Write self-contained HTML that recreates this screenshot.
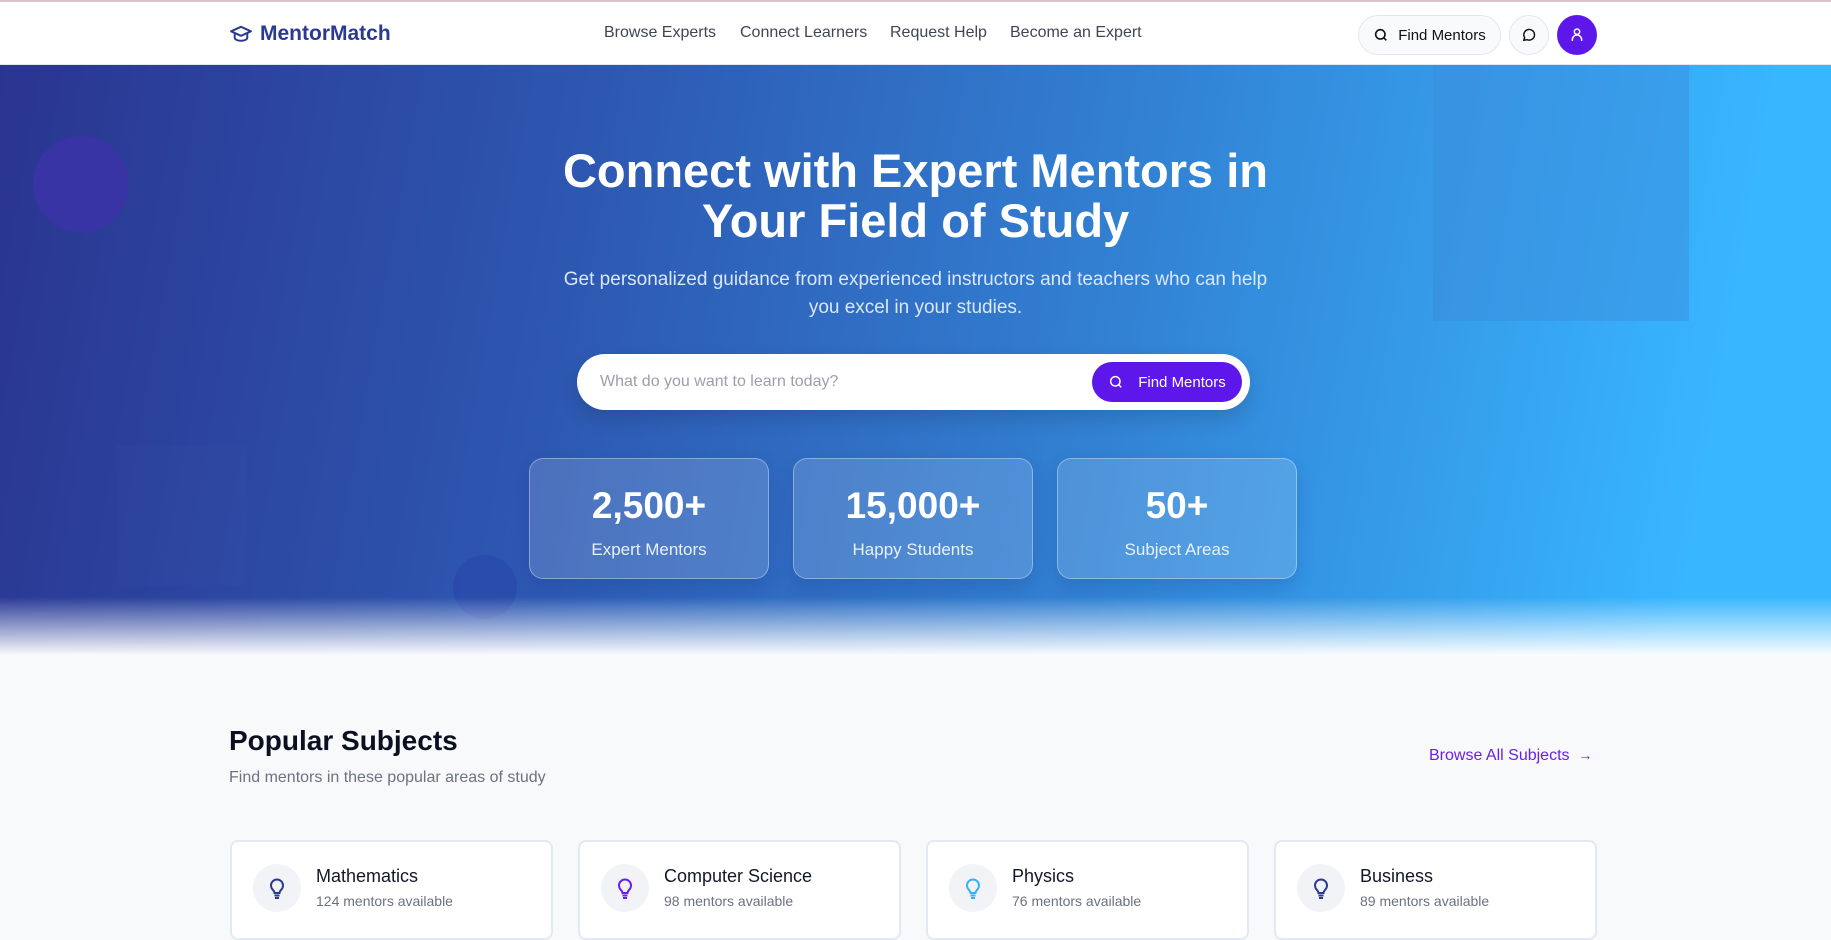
<!DOCTYPE html>
<html><head><meta charset="utf-8">
<style>
*{margin:0;padding:0;box-sizing:border-box}
body{width:1831px;height:924px;overflow:hidden;font-family:"Liberation Sans",sans-serif;background:#f8f9fb;position:relative}
.hdr{position:absolute;left:0;top:0;width:1831px;height:65px;background:#fff;border-top:2px solid #d9c3cc;border-bottom:1px solid #e3e8ef}
.logo{position:absolute;left:230px;top:20px;display:flex;align-items:center;gap:8px;color:#2b3a8f;font-weight:bold;font-size:21px}
.nav{position:absolute;top:22px;font-size:16px;color:#3f4654}
.btn1{position:absolute;left:1358px;top:13px;width:143px;height:40px;border:1px solid #e2e7ef;border-radius:20px;background:#f8fafc;display:flex;align-items:center;justify-content:center;gap:9px;font-size:15px;color:#111}
.cb{position:absolute;left:1509px;top:13px;width:40px;height:40px;border:1px solid #e2e7ef;border-radius:50%;background:#f8fafc;display:flex;align-items:center;justify-content:center}
.av{position:absolute;left:1557px;top:13px;width:40px;height:40px;border-radius:50%;background:#5d17ea;display:flex;align-items:center;justify-content:center}
.hero{position:absolute;left:0;top:65px;width:1831px;height:591px;background:linear-gradient(100deg,#2a3590 0%,#2d56b0 30%,#3281d3 60%,#38b6ff 92%);overflow:hidden}
.fade{position:absolute;left:0;top:532px;width:1831px;height:60px;background:linear-gradient(180deg,rgba(255,255,255,0),#fff)}
h1{position:absolute;left:0;width:1831px;top:146px;text-align:center;color:#fff;font-size:47px;line-height:50px;font-weight:bold}
.sub{position:absolute;left:0;width:1831px;top:266px;text-align:center;color:#dbe6f8;font-size:19px;line-height:28px}
.search{position:absolute;left:577px;top:354px;width:673px;height:56px;border-radius:28px;background:#fff;box-shadow:0 8px 20px rgba(0,0,0,.15)}
.search .ph{position:absolute;left:23px;top:19px;font-size:16px;color:#9aa0ab}
.search .b{position:absolute;left:515px;top:8px;width:150px;height:40px;border-radius:20px;background:#5d17ea;color:#fff;font-size:15px;display:flex;align-items:center;justify-content:center;gap:14px}
.stat{position:absolute;top:458px;width:240px;height:121px;border-radius:14px;background:rgba(255,255,255,.15);border:1px solid rgba(255,255,255,.35);color:#fff;text-align:center;box-shadow:0 8px 18px rgba(20,40,120,.18)}
.stat .n{font-size:37px;font-weight:bold;margin-top:25px;line-height:44px}
.stat .l{font-size:17px;margin-top:12px;color:#e8f0fc}
.card{position:absolute;top:840px;width:323px;height:100px;background:#fff;border:2px solid #e3e9f2;border-radius:8px}
.card .ic{position:absolute;left:21px;top:22px;width:48px;height:48px;border-radius:50%;background:#f1f3f7;display:flex;align-items:center;justify-content:center}
.card .t{position:absolute;left:84px;top:24px;font-size:18px;color:#111827}
.card .s{position:absolute;left:84px;top:51px;font-size:14px;color:#6b7280}
</style></head><body>
<div class="hdr">
 <div class="logo"><svg width="22" height="18" viewBox="0 0 24 20" fill="none" stroke="#2b3a8f" stroke-width="2.2" stroke-linejoin="round"><path d="M12 2 1 7l11 5 11-5z"/><path d="M5 9v5c0 2 3 3.5 7 3.5s7-1.5 7-3.5V9"/></svg>MentorMatch</div>
 <div class="nav" style="left:604px">Browse Experts</div>
 <div class="nav" style="left:740px">Connect Learners</div>
 <div class="nav" style="left:890px">Request Help</div>
 <div class="nav" style="left:1010px">Become an Expert</div>
 <div class="btn1"><svg width="16" height="16" viewBox="0 0 24 24" fill="none" stroke="#111" stroke-width="2.4"><circle cx="11" cy="11" r="7"/><path d="m20 20-4-4"/></svg>Find Mentors</div>
 <div class="cb"><svg width="16" height="16" viewBox="0 0 24 24" fill="none" stroke="#111" stroke-width="2.2"><path d="M4 20l1.5-4A8 8 0 1 1 9 19z" stroke-linejoin="round"/></svg></div>
 <div class="av"><svg width="16" height="16" viewBox="0 0 24 24" fill="none" stroke="#fff" stroke-width="2.2"><circle cx="12" cy="7" r="4"/><path d="M5 21v-2a7 7 0 0 1 14 0v2"/></svg></div>
</div>
<div class="hero">
 <div style="position:absolute;left:33px;top:71px;width:96px;height:96px;border-radius:50%;background:#3834a5"></div>
 <div style="position:absolute;left:1433px;top:0;width:256px;height:256px;background:rgba(60,140,220,.45)"></div>
 <div style="position:absolute;left:453px;top:490px;width:64px;height:64px;border-radius:50%;background:rgba(40,70,170,.6)"></div>
 <div style="position:absolute;left:117px;top:380px;width:130px;height:140px;background:rgba(255,255,255,.01)"></div>
 <div class="fade"></div>
</div>
<h1>Connect with Expert Mentors in<br>Your Field of Study</h1>
<div class="sub">Get personalized guidance from experienced instructors and teachers who can help<br>you excel in your studies.</div>
<div class="search"><div class="ph">What do you want to learn today?</div><div class="b"><svg width="16" height="16" viewBox="0 0 24 24" fill="none" stroke="#fff" stroke-width="2.2"><circle cx="11" cy="11" r="7"/><path d="m20 20-4-4"/></svg>Find Mentors</div></div>
<div class="stat" style="left:529px"><div class="n">2,500+</div><div class="l">Expert Mentors</div></div>
<div class="stat" style="left:793px"><div class="n">15,000+</div><div class="l">Happy Students</div></div>
<div class="stat" style="left:1057px"><div class="n">50+</div><div class="l">Subject Areas</div></div>
<div style="position:absolute;left:229px;top:725px;font-size:28px;font-weight:bold;color:#0b1020">Popular Subjects</div>
<div style="position:absolute;left:229px;top:769px;font-size:16px;color:#6b7280">Find mentors in these popular areas of study</div>
<div style="position:absolute;left:1429px;top:747px;font-size:16px;color:#6a1fe8">Browse All Subjects &nbsp;<span style="font-size:14px">→</span></div>
<div class="card" style="left:230px"><div class="ic"><svg width="18" height="22" viewBox="0 0 18 22" fill="none" stroke="#2b3a8f" stroke-width="2"><path d="M5 13a6 6 0 1 1 8 0c-1 1-1.5 2-1.5 3h-5c0-1-.5-2-1.5-3z"/><path d="M6.5 18.5h5M7 21h4"/></svg></div><div class="t">Mathematics</div><div class="s">124 mentors available</div></div>
<div class="card" style="left:578px"><div class="ic"><svg width="18" height="22" viewBox="0 0 18 22" fill="none" stroke="#6a1fe8" stroke-width="2"><path d="M5 13a6 6 0 1 1 8 0c-1 1-1.5 2-1.5 3h-5c0-1-.5-2-1.5-3z"/><path d="M6.5 18.5h5M7 21h4"/></svg></div><div class="t">Computer Science</div><div class="s">98 mentors available</div></div>
<div class="card" style="left:926px"><div class="ic"><svg width="18" height="22" viewBox="0 0 18 22" fill="none" stroke="#38b0f8" stroke-width="2"><path d="M5 13a6 6 0 1 1 8 0c-1 1-1.5 2-1.5 3h-5c0-1-.5-2-1.5-3z"/><path d="M6.5 18.5h5M7 21h4"/></svg></div><div class="t">Physics</div><div class="s">76 mentors available</div></div>
<div class="card" style="left:1274px"><div class="ic"><svg width="18" height="22" viewBox="0 0 18 22" fill="none" stroke="#2b3a8f" stroke-width="2"><path d="M5 13a6 6 0 1 1 8 0c-1 1-1.5 2-1.5 3h-5c0-1-.5-2-1.5-3z"/><path d="M6.5 18.5h5M7 21h4"/></svg></div><div class="t">Business</div><div class="s">89 mentors available</div></div>
</body></html>
